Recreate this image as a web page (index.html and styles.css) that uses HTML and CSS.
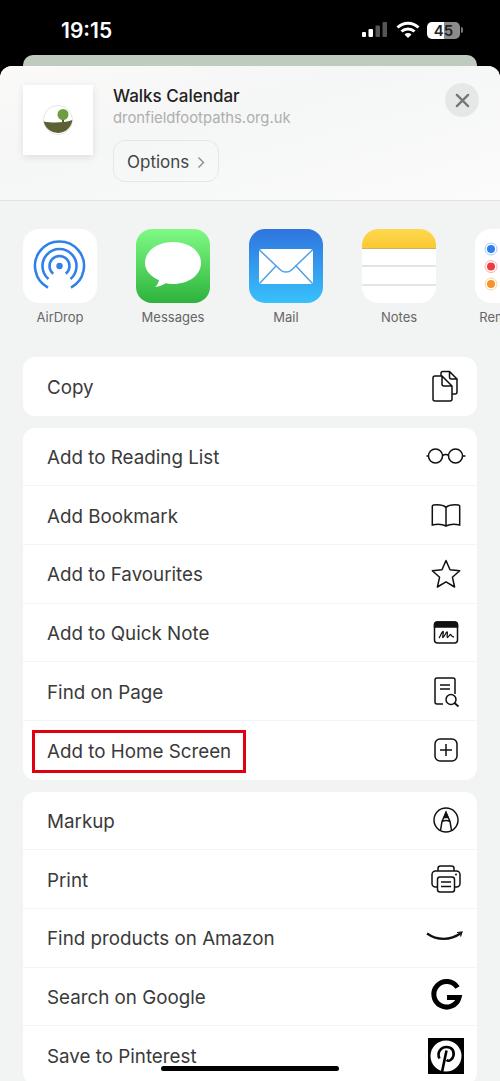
FILE: index.html
```html
<!DOCTYPE html>
<html lang="en">
<head>
    <meta charset="UTF-8">
    <meta name="viewport" content="width=device-width, initial-scale=1.0">
    <title>Share sheet</title>
    <link rel="stylesheet" href="styles.css">
</head>
<body>
    <div class="status-bar">
        <span class="time">19:15</span>
        <div class="status-icons">
            <svg width="28" height="18" viewBox="0 0 28 18">
                <rect x="1" y="11" width="4" height="5" rx="1" fill="#fff"/>
                <rect x="7.500" y="8" width="4.500" height="8" rx="1" fill="#fff"/>
                <rect x="14.500" y="4.500" width="4.500" height="11.500" rx="1" fill="#555"/>
                <rect x="21.500" y="1" width="4.500" height="15" rx="1" fill="#555"/>
            </svg>
            <svg class="wifi" width="24" height="18" viewBox="0 0 24 18" fill="none" stroke="#fff" stroke-width="3">
                <path d="M1.500 6.500a15 15 0 0 1 21 0"/>
                <path d="M5.500 10.500a9.500 9.500 0 0 1 13 0"/>
                <path d="M12 17l-3.500-3.600a5 5 0 0 1 7 0z" fill="#fff" stroke="none"/>
            </svg>
            <div class="battery"><span class="battery-num">45</span></div>
            <span class="battery-nub"></span>
        </div>
    </div>
    <div class="back-card"></div>

    <div class="sheet">
        <header class="sheet-head">
            <div class="thumb">
                <svg width="30" height="30" viewBox="0 0 30 30">
                    <circle cx="15" cy="15" r="14.500" fill="#fff" stroke="#e3e5e0"/>
                    <path d="M.7 16.500c8 1.500 20 1.500 28.600-1.500A14.500 14.500 0 0 1 .7 16.500z" fill="#5c6034"/>
                    <rect x="19" y="12" width="2" height="5" fill="#5d5a35"/>
                    <circle cx="20" cy="9.500" r="5.500" fill="#6f9c3c"/>
                </svg>
            </div>
            <div class="head-text">
                <div class="head-title">Walks Calendar</div>
                <div class="head-url">dronfieldfootpaths.org.uk</div>
                <div class="options">Options
                    <svg width="8" height="13" viewBox="0 0 8 13" fill="none" stroke="#888" stroke-width="1.300"><path d="M1.500 1.500L6.500 6.500l-5 5"/></svg>
                </div>
            </div>
            <div class="close">
                <svg width="15" height="15" viewBox="0 0 16 16" stroke="#777" stroke-width="2.500" stroke-linecap="round"><path d="M2 2l12 12M14 2L2 14"/></svg>
            </div>
        </header>

        <div class="apps">
            <div class="app">
                <div class="app-icon airdrop">
                    <svg width="74" height="74" viewBox="0 0 74 74" fill="none" stroke="#3081ea" stroke-width="2.600">
                        <circle cx="36.500" cy="37" r="3.200" fill="#3081ea" stroke="none"/>
                        <path d="M30.200 44.800A10 10 0 1 1 42.800 44.800"/>
                        <path d="M25.500 50A17 17 0 1 1 47.500 50"/>
                        <path d="M25 58.600A24.500 24.500 0 1 1 48 58.600"/>
                    </svg>
                </div>
                <div class="app-label">AirDrop</div>
            </div>
            <div class="app">
                <div class="app-icon messages">
                    <svg width="74" height="74" viewBox="0 0 74 74">
                        <path d="M37 13c15.500 0 28 8.600 28 21s-12.500 21-28 21c-2.500 0-5-.2-7.300-.7-3 2-6.700 3.300-10.700 3.700 2-1.700 3.500-4 4-6.800C14.500 47.500 9 41.300 9 34c0-12.400 12.500-21 28-21z" fill="#fff"/>
                    </svg>
                </div>
                <div class="app-label">Messages</div>
            </div>
            <div class="app">
                <div class="app-icon mail">
                    <svg width="74" height="74" viewBox="0 0 74 74">
                        <rect x="10" y="20" width="54" height="35" rx="3" fill="#fff"/>
                        <path d="M10.500 21l21 20c3 2.800 8 2.800 11 0l21-20M11 54l16-17M63 54L47 37" fill="none" stroke="#4d9fe8" stroke-width="1.500"/>
                    </svg>
                </div>
                <div class="app-label">Mail</div>
            </div>
            <div class="app">
                <div class="app-icon notes">
                    <div class="notes-top"></div>
                    <div class="notes-line"></div>
                    <div class="notes-line"></div>
                </div>
                <div class="app-label">Notes</div>
            </div>
            <div class="app">
                <div class="app-icon reminders">
                    <svg width="74" height="74" viewBox="0 0 74 74" fill="none">
                        <circle cx="16" cy="20" r="4" fill="#2f7ff0"/><circle cx="16" cy="20" r="6" stroke="#a9c9f5"/>
                        <circle cx="16" cy="37.500" r="4" fill="#ef3b3b"/><circle cx="16" cy="37.500" r="6" stroke="#f5b0b0"/>
                        <circle cx="16" cy="55" r="4" fill="#f79327"/><circle cx="16" cy="55" r="6" stroke="#f8d2a8"/>
                    </svg>
                </div>
                <div class="app-label">Reminders</div>
            </div>
        </div>

        <div class="group">
            <div class="row">
                <span>Copy</span>
                <svg class="row-icon" viewBox="0 0 40 40">
                    <path d="M15 10V7.500A2 2 0 0 1 17 5.500h6.500l7.500 7.500v13a2 2 0 0 1-2 2h-3M23.500 5.500V11a2 2 0 0 0 2 2H31"/>
                    <path d="M9 10h7l10 10v13a2 2 0 0 1-2 2H9a2 2 0 0 1-2-2V12a2 2 0 0 1 2-2zM16 10v8a2 2 0 0 0 2 2h8" fill="#fff"/>
                </svg>
            </div>
        </div>

        <div class="group">
            <div class="row">
                <span>Add to Reading List</span>
                <svg class="row-icon" viewBox="0 0 40 40">
                    <circle cx="9.500" cy="20" r="7"/><circle cx="29.500" cy="20" r="7"/>
                    <path d="M16.500 19.500c2-1.200 5-1.200 6 0M.5 20h2M36.500 20h3"/>
                </svg>
            </div>
            <div class="row">
                <span>Add Bookmark</span>
                <svg class="row-icon" viewBox="0 0 40 40">
                    <path d="M20 12.500C17.500 10 13 9.500 7.500 10c-.8.100-1.200.6-1.200 1.300V30c4.500-1 10-.9 13.700 1 3.700-1.900 9.200-2 13.700-1V11.300c0-.7-.4-1.200-1.200-1.300-5.500-.5-10 0-12.500 2.500zM20 12.500V31"/>
                </svg>
            </div>
            <div class="row">
                <span>Add to Favourites</span>
                <svg class="row-icon" viewBox="0 0 40 40">
                    <path d="M20 6.500l4 9.300 9.700.9-7.300 6.500 2.200 9.800-8.600-5.200-8.600 5.200 2.200-9.800-7.300-6.500 9.700-.9z" stroke-linejoin="round"/>
                </svg>
            </div>
            <div class="row">
                <span>Add to Quick Note</span>
                <svg class="row-icon" viewBox="0 0 40 40">
                    <rect x="8.500" y="10" width="23" height="21" rx="3"/>
                    <path d="M8.500 13a3 3 0 0 1 3-3h17a3 3 0 0 1 3 3v2h-23z" fill="#111"/>
                    <path d="M13 26c1.500-2 3-6.500 4-6.500s-1 6 0 6 3-5.500 4-5.500-.5 5.500.5 5.500 2-3 3-3 .5 2.500 3.500 2.500" stroke-width="1.300"/>
                </svg>
            </div>
            <div class="row">
                <span>Find on Page</span>
                <svg class="row-icon" viewBox="0 0 40 40">
                    <path d="M17 33h-6a2 2 0 0 1-2-2V9a2 2 0 0 1 2-2h16a2 2 0 0 1 2 2v14"/>
                    <path d="M14 14h10M14 18h10"/>
                    <circle cx="25" cy="28.500" r="5"/>
                    <path d="M28.500 32l4 3.500" stroke-width="1.800"/>
                </svg>
            </div>
            <div class="row">
                <span class="highlighted">Add to Home Screen</span>
                <svg class="row-icon" viewBox="0 0 40 40">
                    <rect x="9" y="9" width="22" height="22" rx="5"/>
                    <path d="M20 14v12M14 20h12"/>
                </svg>
            </div>
        </div>

        <div class="group">
            <div class="row">
                <span>Markup</span>
                <svg class="row-icon" viewBox="0 0 40 40">
                    <circle cx="20" cy="20" r="12"/>
                    <path d="M14.500 30.500l1.500-9 4-9 4 9 1.500 9M16 21.500c2.500-1.300 5.500-1.300 8 0"/>
                    <path d="M20 12.500l-2 5h4z" fill="#111"/>
                </svg>
            </div>
            <div class="row">
                <span>Print</span>
                <svg class="row-icon" viewBox="0 0 40 40">
                    <path d="M12 12V9.500a2.500 2.500 0 0 1 2.500-2.500h11a2.500 2.500 0 0 1 2.500 2.500V12"/>
                    <path d="M11 28H9.500A3.500 3.500 0 0 1 6 24.500v-9A3.500 3.500 0 0 1 9.500 12h21a3.500 3.500 0 0 1 3.500 3.500v9a3.500 3.500 0 0 1-3.500 3.500H29"/>
                    <rect x="11.500" y="18" width="17" height="15" rx="2.500" fill="#fff"/>
                    <path d="M15 23h10M15 27.500h10"/>
                    <circle cx="30" cy="15.500" r="1" fill="#111" stroke="none"/>
                </svg>
            </div>
            <div class="row">
                <span>Find products on Amazon</span>
                <svg class="row-icon" viewBox="0 0 40 40">
                    <path d="M1 15.500c10 7 23 7.500 34-.5" stroke-width="2.200"/>
                    <path d="M31 14.500l5-.5-1.500 4.500" stroke-width="1.200"/>
                </svg>
            </div>
            <div class="row">
                <span>Search on Google</span>
                <svg class="row-icon logo" viewBox="0 0 40 40">
                    <path d="M31.500 11.500A12.800 12.800 0 1 0 33 21.500H21" stroke-width="5"/>
                </svg>
            </div>
            <div class="row">
                <span>Save to Pinterest</span>
                <svg class="row-icon pin" viewBox="0 0 40 40">
                    <rect x="2" y="2" width="36" height="36" fill="#000" stroke="none"/>
                    <circle cx="20" cy="20" r="15.500" fill="#fff" stroke="none"/>
                    <path d="M13.500 22.500c-3-6 1.500-11.500 7-11.500 5 0 8 3.500 7 8.500-.8 4-4.500 6.500-7 4.500M20.500 14.500L16 36" fill="none" stroke="#000" stroke-width="2.600"/>
                </svg>
            </div>
        </div>
    </div>

    <div class="home-bar"></div>
</body>
</html>
```

FILE: styles.css
```css
html, body {
    margin: 0;
    padding: 0;
}

body {
    position: relative;
    width: 500px;
    height: 1081px;
    overflow: hidden;
    background-color: #000;
    font-family: Inter, "Liberation Sans", sans-serif;
    color: #3a3a3a;
}

.status-bar {
    height: 55px;
    display: flex;
    justify-content: space-between;
    align-items: center;
    padding: 5px 37px 0 61px;
    box-sizing: border-box;
}

.time {
    color: #fff;
    font-size: 21px;
    font-weight: 600;
}

.status-icons {
    display: flex;
    align-items: center;
}

.wifi {
    margin-left: 7px;
    margin-right: 7px;
}

.battery {
    width: 33px;
    height: 17px;
    border-radius: 5px;
    background: linear-gradient(to right, #fff 0, #fff 50%, #8b8b8b 50%);
    color: #222;
    font-size: 15px;
    font-weight: 600;
    text-align: center;
    line-height: 17px;
}

.battery-nub {
    width: 2px;
    height: 6px;
    margin-left: 1px;
    background-color: #777;
    border-radius: 0 2px 2px 0;
}

.back-card {
    height: 11px;
    margin: 0 23px;
    background-color: #c0cbbf;
    border-radius: 10px 10px 0 0;
}

.sheet {
    height: 1015px;
    overflow: hidden;
    background-color: #f2f3f3;
    border-radius: 12px 12px 0 0;
}

.sheet-head {
    height: 135px;
    box-sizing: border-box;
    display: flex;
    padding: 19px 21px 0 23px;
    background: linear-gradient(165deg, #fbfaf9 0%, #f5f6f6 40%, #fbfbfb 100%);
    border-bottom: 1px solid #e1e2e2;
}

.thumb {
    width: 70px;
    height: 70px;
    flex-shrink: 0;
    display: flex;
    align-items: center;
    justify-content: center;
    background-color: #fff;
    box-shadow: 0 2px 8px rgba(0, 0, 0, 0.1);
}

.head-text {
    flex: 1;
    padding-left: 20px;
}

.head-title {
    font-size: 17px;
    font-weight: 500;
    line-height: 22px;
    color: #222;
}

.head-url {
    font-size: 14.800px;
    line-height: 22px;
    color: #aeaeae;
}

.options {
    display: inline-flex;
    align-items: center;
    gap: 8px;
    height: 38px;
    margin-top: 11px;
    padding: 2px 13px 0;
    border: 1px solid #e5e6e6;
    border-radius: 12px;
    font-size: 17px;
    color: #444;
}

.close {
    width: 34px;
    height: 34px;
    margin-top: -2px;
    display: flex;
    align-items: center;
    justify-content: center;
    border-radius: 50%;
    background-color: #e6e7e7;
}

.apps {
    display: flex;
    gap: 39px;
    padding: 28px 0 0 23px;
    height: 156px;
    box-sizing: border-box;
    overflow: hidden;
}

.app {
    width: 74px;
    flex-shrink: 0;
}

.app-icon {
    width: 74px;
    height: 74px;
    border-radius: 16px;
    overflow: hidden;
    background-color: #fff;
}

.messages {
    background: linear-gradient(to bottom, #7ffb85, #2db23c);
}

.mail {
    background: linear-gradient(to bottom, #2f74de, #38c1fb);
}

.notes-top {
    height: 19px;
    background: linear-gradient(to bottom, #fdd84f, #fbc933);
    border-bottom: 1px solid #c9b46a;
}

.notes-line {
    height: 2px;
    margin-top: 16px;
    background-color: #e4e4e4;
}

.notes-line + .notes-line {
    margin-top: 17px;
}

.app-label {
    margin: 6px -10px 0;
    font-size: 13px;
    line-height: 16px;
    text-align: center;
    color: #666;
}

.group {
    margin: 0 23px 12px;
    background-color: #fff;
    border-radius: 12px;
}

.row {
    height: 58.670px;
    box-sizing: border-box;
    display: flex;
    align-items: center;
    justify-content: space-between;
    padding: 0 11px 0 24px;
    border-bottom: 1px solid #f2f3f3;
    font-size: 18.800px;
}

.row:last-child {
    border-bottom: none;
}

.row span {
    margin-top: 2px;
}

.highlighted {
    position: relative;
}

.highlighted::after {
    content: "";
    position: absolute;
    top: -10px;
    bottom: -10px;
    left: -15px;
    right: -15px;
    border: 3px solid #e0000f;
}

.row-icon {
    width: 40px;
    height: 40px;
    fill: none;
    stroke: #111;
    stroke-width: 1.500;
}

.logo {
    stroke: #000;
}

.home-bar {
    position: absolute;
    left: 161px;
    top: 1066px;
    width: 178px;
    height: 5px;
    border-radius: 3px;
    background-color: #000;
}
```
